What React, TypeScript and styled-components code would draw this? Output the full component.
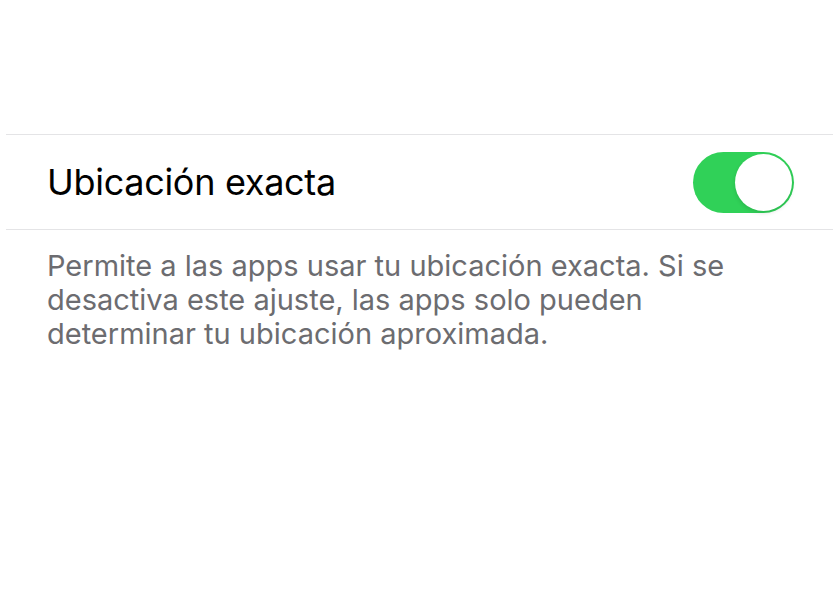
import React, { useState } from "react";
import styled, { createGlobalStyle } from "styled-components";

const GlobalStyle = createGlobalStyle`
  html, body {
    margin: 0;
    padding: 0;
    background: #ffffff;
  }
  body {
    font-family: Inter, "Liberation Sans", sans-serif;
    -webkit-font-smoothing: antialiased;
  }
`;

export default function App() {
  const [exact, setExact] = useState(true);

  return (
    <>
      <GlobalStyle />
      <Page>
        <Group>
          <Row>
            <Label>Ubicación exacta</Label>
            <Switch
              role="switch"
              aria-checked={exact}
              $on={exact}
              onClick={() => setExact((v) => !v)}
            >
              <Knob $on={exact} />
            </Switch>
          </Row>
        </Group>
        <Footer>
          Permite a las apps usar tu ubicación exacta. Si se desactiva este
          ajuste, las apps solo pueden determinar tu ubicación aproximada.
        </Footer>
      </Page>
    </>
  );
}

const Page = styled.div`
  padding-top: 134px;
  min-height: 600px;
  box-sizing: border-box;
`;

const Group = styled.section`
  margin: 0 7px 0 6px;
  border-top: 1.5px solid #e4e4e6;
  border-bottom: 1.5px solid #e4e4e6;
`;

const Row = styled.div`
  height: 94px;
  display: flex;
  align-items: center;
  justify-content: space-between;
  padding: 0 39px 0 41px;
`;

const Label = styled.span`
  font-size: 36px;
  line-height: 44px;
  color: #000000;
  letter-spacing: -0.3px;
`;

const Switch = styled.button<{ $on: boolean }>`
  width: 101px;
  height: 61px;
  padding: 2px;
  border: none;
  border-radius: 31px;
  background: ${(p) => (p.$on ? "#30d158" : "#e9e9eb")};
  display: flex;
  justify-content: ${(p) => (p.$on ? "flex-end" : "flex-start")};
  align-items: center;
  cursor: pointer;
  box-sizing: border-box;
`;

const Knob = styled.span<{ $on: boolean }>`
  width: 57px;
  height: 57px;
  border-radius: 50%;
  background: #ffffff;
  box-shadow: 0 2px 4px rgba(0, 0, 0, 0.12);
`;

const Footer = styled.p`
  margin: 0;
  padding: 19px 46px 0 47px;
  font-size: 29px;
  line-height: 34px;
  color: #6c6c70;
`;
